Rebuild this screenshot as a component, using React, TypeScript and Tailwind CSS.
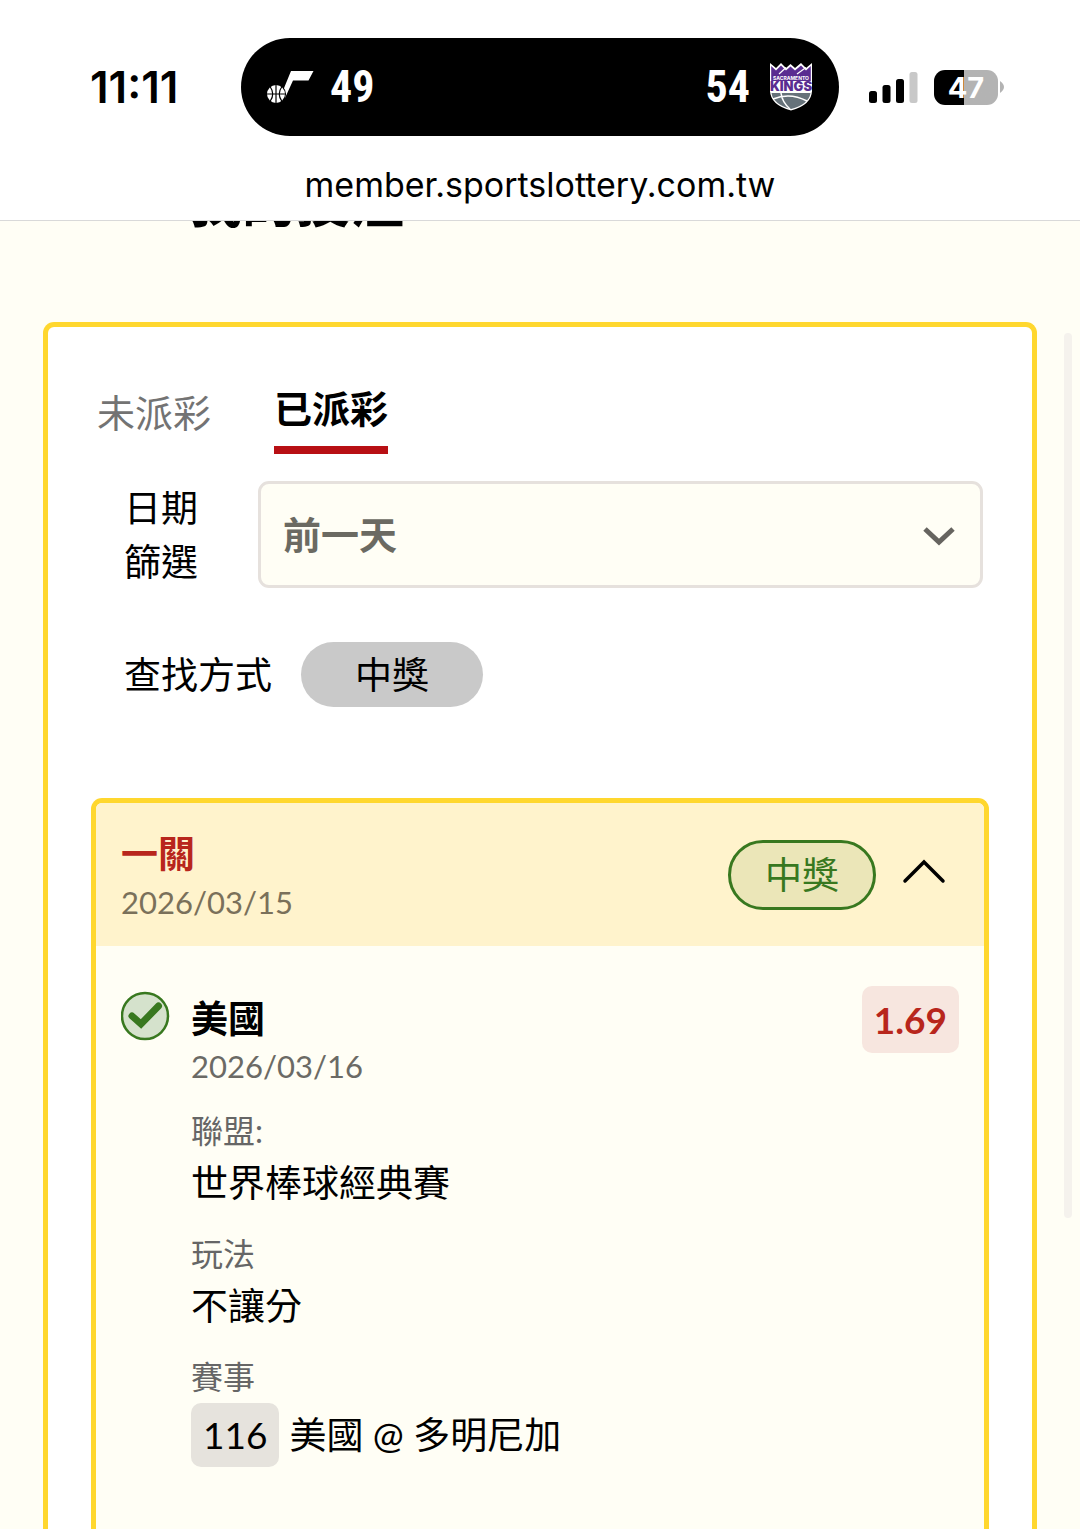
import { useState } from "react";

const CJK = "font-['Lato','Noto_Sans_CJK_TC',sans-serif]";

function JazzLogo() {
  return (
    <svg width="48" height="34" viewBox="0 0 48 34" aria-label="Utah Jazz" role="img">
      <path d="M16 23 L25 1 H47.500 L42.500 10.500 H27 L19 28 Z" fill="#fff" />
      <circle cx="10" cy="24" r="10" fill="#000" />
      <circle cx="10" cy="24" r="9" fill="#fff" />
      <path
        d="M10 14V34M0 24H20M4 16.500Q9.500 24 4 31.500M16 16.500Q10.500 24 16 31.500"
        stroke="#000"
        strokeWidth="1.200"
        fill="none"
      />
    </svg>
  );
}

function KingsLogo() {
  return (
    <svg width="42" height="48" viewBox="0 0 42 48" aria-label="Sacramento Kings" role="img">
      <path
        d="M0 0 L6 5 L11 0 L16 5 L20.500 1 L25 5 L31 0 L36 5 L42 0 V28 Q41.500 42 21 47.500 Q0.500 42 0 28 Z"
        fill="#fff"
      />
      <path
        d="M1.200 3 L6 7.500 L11 2.500 L16 7.500 L20.500 3.500 L25 7.500 L31 2.500 L36 7.500 L40.800 3 V28 H1.200 Z"
        fill="#5a2d91"
      />
      <path d="M9 11 L16 4.500 M27 11 L36 4.500" stroke="#fff" strokeWidth="1.200" fill="none" />
      <text x="21" y="17" textAnchor="middle" fontSize="5" fontWeight="700" fill="#fff" fontFamily="Inter, sans-serif">
        SACRAMENTO
      </text>
      <rect x="0" y="18" width="42" height="11" fill="#fff" />
      <text x="21" y="28" textAnchor="middle" fontSize="13" fontWeight="900" fill="#5a2d91" fontFamily="Inter, sans-serif">
        KINGS
      </text>
      <path d="M1.500 30 H40.500 Q39 41 21 46 Q3 41 1.500 30 Z" fill="#66727a" />
      <path d="M3 36 Q20 29 37 38 M11 30 Q12 39 20 46" stroke="#fff" strokeWidth="1.500" fill="none" />
    </svg>
  );
}

function StatusBar() {
  return (
    <div className="grid grid-cols-[1fr_598px_1fr] items-center pt-[38px]">
      <time className="pl-[90px] text-[44px] leading-none font-semibold">11:11</time>
      <div className="flex h-[98px] items-center justify-between rounded-full bg-black pr-[27px] pl-[25px] font-['Roboto_Condensed','Roboto',sans-serif] text-[44px] leading-none font-bold text-white">
        <div className="flex items-center gap-4">
          <JazzLogo />
          <span>49</span>
        </div>
        <div className="flex items-center gap-5">
          <span>54</span>
          <KingsLogo />
        </div>
      </div>
      <div className="flex items-center gap-4 pl-[30px]">
        <svg width="49" height="34" viewBox="0 0 49 34" aria-label="Signal" role="img">
          <rect x="0" y="21" width="8" height="12" rx="2.500" />
          <rect x="13.500" y="15" width="8" height="18" rx="2.500" />
          <rect x="27" y="9" width="8" height="24" rx="2.500" />
          <rect x="40.500" y="2" width="8" height="31" rx="2.500" fill="#c8c8c8" />
        </svg>
        <div className="flex items-center gap-[2px]">
          <div className="flex h-[35px] w-16 items-center justify-center rounded-[11px] bg-linear-to-r from-black from-47% to-[#b3b3b3] to-47% text-[29px] leading-none font-bold text-white">
            47
          </div>
          <svg width="4" height="12" viewBox="0 0 4 12" aria-hidden="true">
            <path d="M0 0 Q4 3 4 6 Q4 9 0 12 Z" fill="#b3b3b3" />
          </svg>
        </div>
      </div>
    </div>
  );
}

function Field({ label, children }: { label: string; children: React.ReactNode }) {
  return (
    <div>
      <dt className="text-[32px] leading-[48px] text-[#666]">{label}</dt>
      <dd className="text-[37px] leading-[56px]">{children}</dd>
    </div>
  );
}

function BetCard() {
  const [open, setOpen] = useState(true);
  return (
    <article className="mt-[91px] flex flex-1 flex-col rounded-t-[11px] border-[5px] border-b-0 border-[#ffd72e]">
      <header className="flex h-[143px] items-center justify-between rounded-t-md bg-[#fff3cc] pr-9 pl-[25px]">
        <div className="pt-1">
          <h2 className="text-[37px] leading-[50px] font-bold text-[#b8261c]">一關</h2>
          <time className="block text-[31px] leading-[46px] text-[#7a705a]">2026/03/15</time>
        </div>
        <div className="flex items-center gap-6">
          <span className="flex h-[70px] w-[148px] items-center justify-center rounded-full border-[3px] border-[#38781f] bg-[#ebe6b8] text-[37px] leading-none text-[#38781f]">
            中獎
          </span>
          <button aria-label="收合" aria-expanded={open} onClick={() => setOpen(!open)}>
            <svg width="48" height="40" viewBox="0 0 48 40" fill="none" stroke="#000" strokeWidth="3.500" strokeLinecap="round">
              <path d="M5 26 L24 7 L43 26" />
            </svg>
          </button>
        </div>
      </header>
      {open && (
        <div className="flex flex-1 items-start bg-[#fffef5] px-[25px] pt-10">
          <svg className="mt-[5px] shrink-0" width="50" height="50" viewBox="0 0 50 50" aria-label="中獎" role="img">
            <circle cx="24" cy="25" r="23" fill="#d5e2cc" stroke="#38781f" strokeWidth="2.500" />
            <path d="M11 25 L20 33 L37.500 15" fill="none" stroke="#38781f" strokeWidth="7" strokeLinecap="round" />
          </svg>
          <div className="ml-5 flex-1">
            <h3 className="pt-[5px] text-[37px] leading-[56px] font-bold">美國</h3>
            <time className="block text-[31px] leading-[38px] text-[#6b6a65]">2026/03/16</time>
            <dl className="mt-[22px] flex flex-col gap-[19px]">
              <Field label="聯盟:">世界棒球經典賽</Field>
              <Field label="玩法">不讓分</Field>
              <Field label="賽事">
                <span className="flex h-[68px] items-center gap-[10px]">
                  <span className="rounded-[10px] bg-[#e6e3dd] px-3 leading-[64px]">116</span>
                  <span>美國 @ 多明尼加</span>
                </span>
              </Field>
            </dl>
          </div>
          <span className="rounded-[10px] bg-[#f7e6df] px-3 text-[37px] leading-[67px] font-bold text-[#b8261c]">1.69</span>
        </div>
      )}
    </article>
  );
}

export default function App() {
  const [tab, setTab] = useState("settled");
  return (
    <div className={`relative flex min-h-screen flex-col bg-[#fffef5] text-black ${CJK}`}>
      <div className="h-[221px] border-b border-[#d9d9d9] bg-white font-['Inter',sans-serif]">
        <StatusBar />
        <p className="mt-[25px] text-center text-[34px] leading-[48px]">member.sportslottery.com.tw</p>
      </div>
      <div className="h-[101px] overflow-hidden pl-[188px]">
        <h1 className="-mt-[58px] text-[54px] leading-[80px] font-bold">我的投注</h1>
      </div>
      <main className="mx-[43px] flex flex-1 flex-col rounded-t-[11px] border-[5px] border-b-0 border-[#ffd72e] bg-white px-[43px]">
        <div role="tablist" className="flex items-start gap-[63px] pt-[54px] pl-[6px]">
          <button
            role="tab"
            aria-selected={tab === "open"}
            onClick={() => setTab("open")}
            className="pt-1 text-[38px] leading-[54px] text-[#737373]"
          >
            未派彩
          </button>
          <button
            role="tab"
            aria-selected={tab === "settled"}
            onClick={() => setTab("settled")}
            className="border-b-8 border-[#b80f14] pb-[11px] text-[38px] leading-[54px] font-bold"
          >
            已派彩
          </button>
        </div>
        <div className="mt-[27px] flex items-start gap-[58px] pr-[6px] pl-[33px]">
          <label htmlFor="date-filter" className="w-[76px] text-[37px] leading-[54px]">
            日期篩選
          </label>
          <div className="relative flex-1">
            <select
              id="date-filter"
              className="block h-[107px] w-full appearance-none rounded-[11px] border-[3px] border-[#e6e1dd] bg-[#fffef5] pr-20 pl-[22px] text-[38px] font-bold text-[#6b6a62]"
            >
              <option>前一天</option>
              <option>今天</option>
            </select>
            <svg
              className="pointer-events-none absolute top-[46px] right-7"
              width="32"
              height="20"
              viewBox="0 0 32 20"
              fill="none"
              stroke="#66645f"
              strokeWidth="5"
              aria-hidden="true"
            >
              <path d="M2 2 L16 15 L30 2" />
            </svg>
          </div>
        </div>
        <div className="mt-[53px] flex items-center gap-[29px] pl-[33px]">
          <span className="text-[37px] leading-[54px]">查找方式</span>
          <button className="h-[65px] w-[182px] rounded-full bg-[#c9c9c9] text-[37px] leading-none">中獎</button>
        </div>
        <BetCard />
      </main>
      <div className="absolute top-[333px] right-2 h-[885px] w-2 rounded-full bg-[#f5f2ed]" />
    </div>
  );
}
